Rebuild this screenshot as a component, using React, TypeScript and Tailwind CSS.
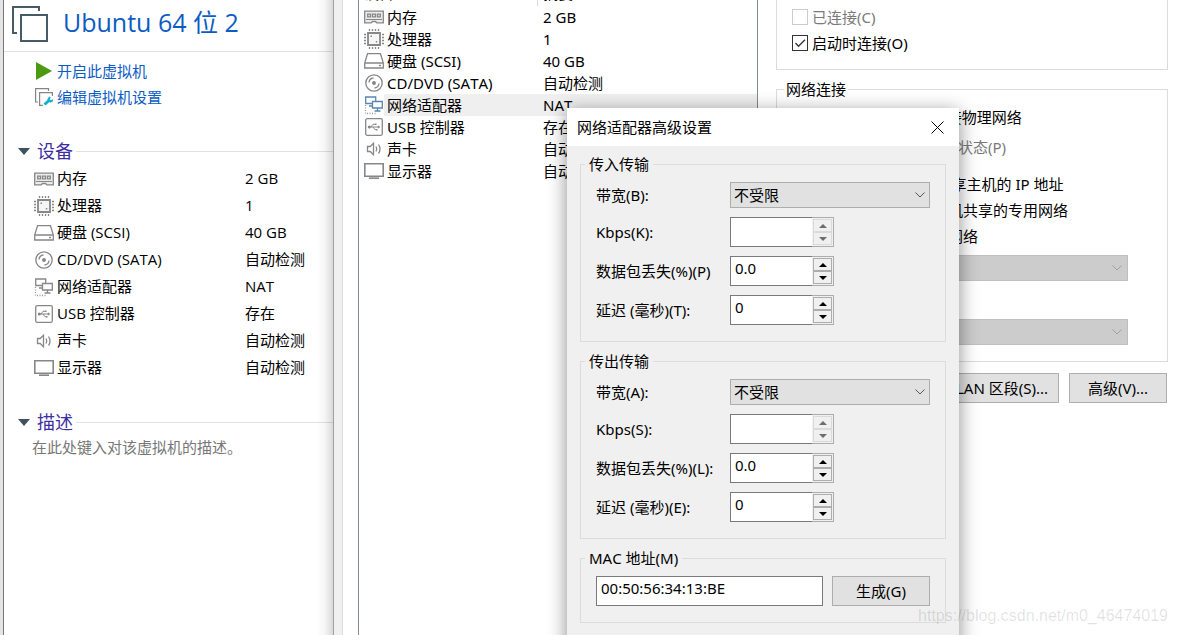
import { useState } from "react";
import type { ReactNode } from "react";

type IconName = "memory" | "cpu" | "disk" | "cd" | "network" | "usb" | "sound" | "display";

interface Device {
  icon: IconName;
  name: string;
  summary: string;
}

const devices: Device[] = [
  { icon: "memory", name: "内存", summary: "2 GB" },
  { icon: "cpu", name: "处理器", summary: "1" },
  { icon: "disk", name: "硬盘 (SCSI)", summary: "40 GB" },
  { icon: "cd", name: "CD/DVD (SATA)", summary: "自动检测" },
  { icon: "network", name: "网络适配器", summary: "NAT" },
  { icon: "usb", name: "USB 控制器", summary: "存在" },
  { icon: "sound", name: "声卡", summary: "自动检测" },
  { icon: "display", name: "显示器", summary: "自动检测" },
];

const shapes: Record<IconName, ReactNode> = {
  memory: (
    <>
      <path d="M.7 4.200h18.600v11.600h-6.500l-1.300-1.300H8.500l-1.300 1.300H.7z" fill="#ececec" />
      <path d="M3.700 7.200h2.800v2.600H3.700zM8.500 7.200h3v2.600h-3zM13.500 7.200h2.800v2.600h-2.800z" />
      <path d="M2 12.500h16" strokeWidth="1" />
    </>
  ),
  cpu: (
    <>
      <path d="M4 4h12v12H4z" strokeWidth="1.800" fill="#f6f6f6" />
      <path d="M5.500 0v2M8.500 0v2M11.500 0v2M14.500 0v2M5.500 18v2M8.500 18v2M11.500 18v2M14.500 18v2M0 5.500h2M0 8.500h2M0 11.500h2M0 14.500h2M18 5.500h2M18 8.500h2M18 11.500h2M18 14.500h2" />
      <path d="M6.500 7.200h1.500M11.800 12.800h1.500" strokeWidth="1.500" />
    </>
  ),
  disk: (
    <>
      <path d="M3.500 2.700h13l2.800 9.300v5H.7v-5zM.7 12h18.600" />
      <path d="M15 14.500h2" />
    </>
  ),
  cd: (
    <>
      <circle cx="10" cy="10" r="8.200" />
      <circle cx="10" cy="10" r="1.300" fill="currentColor" />
      <path d="M5 9.500a5 5 0 0 1 4.500-4.500M15 10.500a5 5 0 0 1-4.500 4.500" />
    </>
  ),
  network: (
    <>
      <path d="M8 8.500H1.700V2h10v4M5 11h3.500" />
      <path d="M8.500 6.500h9.800V13H8.500z" fill="#fff" />
      <path d="M13.500 13v2.500M10.500 16h6" />
      <path d="M1.500 10v8.500H13" stroke="#999" strokeDasharray="1 1.500" />
    </>
  ),
  usb: (
    <>
      <rect x="1.700" y="1.700" width="16.600" height="16.600" rx="1.500" />
      <path d="M5 10h9M7 10l2-2.700h2M9 10l2 2.700h1.500" strokeWidth="1" />
      <circle cx="5.300" cy="10" r=".9" fill="currentColor" />
      <path d="M14 8.800l2 1.200-2 1.200z" fill="currentColor" strokeWidth=".5" />
      <path d="M11 7.300h1.500M12 12.700h1.500" strokeWidth="1.600" />
    </>
  ),
  sound: (
    <>
      <path d="M3.500 7.500h2.700l3.300-3.300v11.600L6.200 12.500H3.500z" />
      <path d="M12 7.500q1.500 2.500 0 5M14.500 5.500q3 4.500 0 9" />
    </>
  ),
  display: (
    <>
      <path d="M.8 2.800h18.400v12.400H.8z" strokeWidth="1.600" />
      <path d="M5 17.200h10" strokeWidth="1.600" />
    </>
  ),
};

function DeviceIcon({ name, active = false }: { name: IconName; active?: boolean }) {
  return (
    <svg
      viewBox="0 0 20 20"
      fill="none"
      stroke="currentColor"
      strokeWidth="1.300"
      className={`size-5 shrink-0 ${active ? "text-[#5b86ad]" : "text-[#878787]"}`}
      aria-hidden="true"
    >
      {shapes[name]}
    </svg>
  );
}

function Chevron({ className }: { className: string }) {
  return (
    <svg viewBox="0 0 10 6" fill="none" stroke="currentColor" className={`pointer-events-none absolute w-[10px] ${className}`}>
      <path d="M.5 .5L5 5l4.500-4.500" />
    </svg>
  );
}

function SectionTitle({ children }: { children: ReactNode }) {
  return (
    <h2 className="flex h-7 items-center pl-[14px] text-[18px] text-[#3c2ea0]">
      <svg viewBox="0 0 12 7" className="mr-[7px] w-3">
        <path d="M0 0h12L6 7z" fill="#41525f" />
      </svg>
      {children}
      <span className="ml-[3px] h-px flex-1 bg-[#dfe1e3]" />
    </h2>
  );
}

function Sidebar() {
  return (
    <aside className="relative w-[334px] shrink-0 border-r border-l-4 border-r-[#a0a0a0] border-l-[#e4e4e4] bg-white font-['Open_Sans','Noto_Sans_CJK_SC',sans-serif]">
      <div className="absolute inset-y-0 right-0 w-4 bg-linear-to-l from-black/15 via-black/4 to-transparent" />
      <div className="absolute inset-y-0 -left-px w-px bg-[#777]" />

      <header className="flex h-[52px] items-center border-b border-[#dfe1e3] pb-1 pl-2">
        <svg viewBox="0 0 36 36" fill="none" stroke="#475a68" strokeWidth="2" className="mr-[15px] size-9">
          <path d="M27 5V1H1v26h4" />
          <path d="M9 9h26v26H9z" />
        </svg>
        <h1 className="pb-1 text-[25px] leading-8 text-[#0b5cc4]">Ubuntu 64 位 2</h1>
      </header>

      <nav className="pt-[6px] pl-[31px] text-[15px] leading-[26px] text-[#0b5cc4]">
        <a href="#start" className="flex items-center gap-1">
          <svg viewBox="0 0 18 18" className="size-[18px]">
            <path d="M1 0l16 9-16 9z" fill="#4b9a10" />
          </svg>
          开启此虚拟机
        </a>
        <a href="#settings" className="flex items-center gap-1">
          <svg viewBox="0 0 18 18" fill="none" stroke="#858585" strokeWidth="1.200" className="size-[18px]">
            <path d="M13.500 3V.6H.6v13.400H3M8 17.400H4.600V4.600h12.800V8" />
            <path d="M9.500 16.500l4.500-4" stroke="#10b0d0" strokeWidth="3" />
            <path d="M15 9l-1.500 2.500 2 2 2.500-1.500" stroke="#10b0d0" strokeWidth="2" />
          </svg>
          编辑虚拟机设置
        </a>
      </nav>

      <div className="pt-[27px]">
        <SectionTitle>设备</SectionTitle>
      </div>
      <table className="w-full table-fixed text-[15px] text-black">
        <tbody>
          {devices.map((device) => (
            <tr key={device.name} className="h-[27px]">
              <td className="w-[241px] p-0">
                <div className="flex items-center gap-[3px] pl-[30px]">
                  <DeviceIcon name={device.icon} />
                  {device.name}
                </div>
              </td>
              <td className="p-0">{device.summary}</td>
            </tr>
          ))}
        </tbody>
      </table>

      <div className="pt-[27px]">
        <SectionTitle>描述</SectionTitle>
      </div>
      <p className="pl-7 text-[15px] leading-[22px] text-[#777]">在此处键入对该虚拟机的描述。</p>
    </aside>
  );
}

function DeviceList() {
  return (
    <div className="w-[400px] shrink-0 border-x border-[#828790]">
      <table className="w-full table-fixed">
        <thead>
          <tr className="text-left">
            <th className="w-[178px] border-r border-[#dcdcdc] p-0 font-normal">
              <div className="flex h-[6px] items-end overflow-hidden pb-[2px] pl-[5px]">设备</div>
            </th>
            <th className="p-0 font-normal">
              <div className="flex h-[6px] items-end overflow-hidden pb-[2px] pl-[6px]">摘要</div>
            </th>
          </tr>
        </thead>
        <tbody>
          {devices.map((device) => {
            const selected = device.icon === "network";
            return (
              <tr key={device.name} className="h-[22px] leading-[22px]">
                <td className="p-0">
                  <div className="flex items-center pl-[5px]">
                    <DeviceIcon name={device.icon} active={selected} />
                    <span className={`flex-1 pl-[3px] ${selected ? "bg-[#efefef]" : ""}`}>{device.name}</span>
                  </div>
                </td>
                <td className={`p-0 pl-[6px] ${selected ? "bg-[#efefef]" : ""}`}>{device.summary}</td>
              </tr>
            );
          })}
        </tbody>
      </table>
    </div>
  );
}

function CheckBox({ label, checked = false, disabled = false }: { label: string; checked?: boolean; disabled?: boolean }) {
  return (
    <label className={`flex h-[26px] items-center gap-1 whitespace-nowrap ${disabled ? "text-[#7a7a7a]" : ""}`}>
      <span className="relative size-4">
        <input
          type="checkbox"
          defaultChecked={checked}
          disabled={disabled}
          className="peer block size-4 appearance-none border border-[#333] bg-white disabled:border-[#ccc]"
        />
        <svg viewBox="0 0 16 16" fill="none" stroke="#333" strokeWidth="1.300" className="pointer-events-none absolute inset-0 hidden peer-checked:block">
          <path d="M3.500 8l3 3.200 6.500-6.500" />
        </svg>
      </span>
      {label}
    </label>
  );
}

function Radio({ label, checked = false }: { label: string; checked?: boolean }) {
  return (
    <label className="flex h-[26px] items-center gap-[7px] whitespace-nowrap">
      <input type="radio" name="connection" defaultChecked={checked} className="size-4" />
      {label}
    </label>
  );
}

function DisabledSelect({ label }: { label: string }) {
  return (
    <div className="relative mr-[39px]">
      <select aria-label={label} disabled className="block h-[26px] w-full appearance-none border border-[#bfbfbf] bg-[#ccc]" />
      <Chevron className="top-[10px] right-[6px] text-[#a0a0a0]" />
    </div>
  );
}

function NetworkPanel() {
  return (
    <section className="ml-[18px] min-w-0 flex-1">
      <div className="border border-t-0 border-[#dcdcdc] pt-1 pb-[13px] pl-[15px]">
        <CheckBox label="已连接(C)" disabled />
        <CheckBox label="启动时连接(O)" checked />
      </div>

      <fieldset className="mt-[9px] border border-[#dcdcdc] pt-[5px] pb-4 pl-[15px]">
        <legend className="-ml-2 px-[2px] leading-5">网络连接</legend>
        <Radio label="桥接模式(B): 直接连接物理网络" />
        <div className="mt-1 pl-[26px]">
          <CheckBox label="复制物理网络连接状态(P)" disabled />
        </div>
        <div className="mt-[11px]">
          <Radio label="NAT 模式(N): 用于共享主机的 IP 地址" checked />
        </div>
        <Radio label="仅主机模式(H): 与主机共享的专用网络" />
        <Radio label="自定义(U): 特定虚拟网络" />
        <div className="mt-[6px]">
          <DisabledSelect label="虚拟网络" />
        </div>
        <div className="my-[6px]">
          <Radio label="LAN 区段(L):" />
        </div>
        <DisabledSelect label="LAN 区段" />
      </fieldset>

      <div className="mt-[11px] flex justify-end gap-[10px] pr-px">
        <button className="h-[30px] w-[114px] border border-[#adadad] bg-[#e1e1e1] whitespace-nowrap">LAN 区段(S)...</button>
        <button className="h-[30px] w-[98px] border border-[#adadad] bg-[#e1e1e1]">高级(V)...</button>
      </div>
    </section>
  );
}

function Spinner({ id, initial, disabled = false }: { id: string; initial: string; disabled?: boolean }) {
  const [value, setValue] = useState(initial);
  const digits = initial.includes(".") ? 1 : 0;
  const step = (delta: number) => setValue(Math.max(0, Number(value) + delta).toFixed(digits));
  const button = "flex h-[13px] w-[19px] items-center justify-center border border-[#adadad] bg-[#f0f0f0] text-black disabled:border-[#dadada] disabled:text-[#6d6d6d]";

  return (
    <div className="flex h-[30px] w-[104px]">
      <input
        id={id}
        type="text"
        value={value}
        disabled={disabled}
        onChange={(e) => setValue(e.target.value)}
        className="w-[82px] border border-r-0 border-[#7a7a7a] bg-white pb-[6px] pl-1"
      />
      <div className="w-[22px] border border-l-0 border-[#adadad] p-px">
        <button aria-label="增加" disabled={disabled} onClick={() => step(1)} className={button}>
          <svg viewBox="0 0 8 4" className="w-2">
            <path d="M0 4l4-4 4 4z" fill="currentColor" />
          </svg>
        </button>
        <button aria-label="减少" disabled={disabled} onClick={() => step(-1)} className={button}>
          <svg viewBox="0 0 8 4" className="w-2">
            <path d="M0 0l4 4 4-4z" fill="currentColor" />
          </svg>
        </button>
      </div>
    </div>
  );
}

function Field({ id, label, children }: { id: string; label: string; children: ReactNode }) {
  return (
    <div className="flex items-center">
      <label htmlFor={id} className="w-[134px] shrink-0 whitespace-nowrap">
        {label}
      </label>
      {children}
    </div>
  );
}

interface TransferProps {
  id: string;
  title: string;
  labels: [string, string, string, string];
}

function TransferGroup({ id, title, labels }: TransferProps) {
  return (
    <fieldset className="min-w-0 border border-[#dcdcdc] px-[15px] pt-2 pb-4">
      <legend className="-ml-[11px] px-1 leading-5">{title}</legend>
      <div className="flex flex-col gap-[9px]">
        <Field id={`${id}-bandwidth`} label={labels[0]}>
          <div className="relative flex-1">
            <select id={`${id}-bandwidth`} className="block h-[26px] w-full appearance-none border border-[#adadad] bg-[#e1e1e1] pl-[3px]">
              <option>不受限</option>
            </select>
            <Chevron className="top-[10px] right-[5px] text-[#555]" />
          </div>
        </Field>
        <Field id={`${id}-kbps`} label={labels[1]}>
          <Spinner id={`${id}-kbps`} initial="" disabled />
        </Field>
        <Field id={`${id}-loss`} label={labels[2]}>
          <Spinner id={`${id}-loss`} initial="0.0" />
        </Field>
        <Field id={`${id}-delay`} label={labels[3]}>
          <Spinner id={`${id}-delay`} initial="0" />
        </Field>
      </div>
    </fieldset>
  );
}

function AdvancedDialog() {
  return (
    <div
      role="dialog"
      aria-labelledby="dialog-title"
      className="absolute top-[108px] left-[567px] w-[392px] bg-[#f0f0f0] pb-12 shadow-[0_4px_18px_rgba(0,0,0,0.45)]"
    >
      <div className="flex h-[38px] items-center justify-between bg-white pr-[15px] pl-[10px] font-['Open_Sans','Noto_Sans_CJK_SC',sans-serif]">
        <h2 id="dialog-title">网络适配器高级设置</h2>
        <button aria-label="关闭">
          <svg viewBox="0 0 13 13" stroke="#000" className="size-[13px]">
            <path d="M.5 .5l12 12M12.500 .5l-12 12" />
          </svg>
        </button>
      </div>
      <div className="flex flex-col gap-[9px] px-[13px] pt-2">
        <TransferGroup id="in" title="传入传输" labels={["带宽(B):", "Kbps(K):", "数据包丢失(%)(P)", "延迟 (毫秒)(T):"]} />
        <TransferGroup id="out" title="传出传输" labels={["带宽(A):", "Kbps(S):", "数据包丢失(%)(L):", "延迟 (毫秒)(E):"]} />
        <fieldset className="min-w-0 border border-[#dcdcdc] px-[15px] pt-2 pb-4">
          <legend className="-ml-[11px] px-1 leading-5">
            <label htmlFor="mac">MAC 地址(M)</label>
          </legend>
          <div className="flex items-center gap-[9px]">
            <input id="mac" type="text" defaultValue="00:50:56:34:13:BE" className="h-[30px] w-full min-w-0 flex-1 border border-[#7a7a7a] bg-white pb-[6px] pl-1" />
            <button className="h-[30px] w-[98px] shrink-0 border border-[#adadad] bg-[#e1e1e1]">生成(G)</button>
          </div>
        </fieldset>
      </div>
    </div>
  );
}

export default function App() {
  return (
    <div className="relative flex h-screen overflow-hidden bg-white font-['Noto_Sans','Noto_Sans_CJK_SC',sans-serif] text-[15px] text-black [font-kerning:none]">
      <Sidebar />
      <div className="w-[9px] shrink-0 border-r border-[#dcdcdc] bg-[#f0f0f0]" />
      <main className="flex min-w-0 flex-1 pr-[9px] pl-[15px]">
        <DeviceList />
        <NetworkPanel />
      </main>
      <AdvancedDialog />
      <span className="absolute right-[9px] bottom-[7px] font-['Liberation_Sans',sans-serif] text-base text-black/12">
        https://blog.csdn.net/m0_46474019
      </span>
    </div>
  );
}
